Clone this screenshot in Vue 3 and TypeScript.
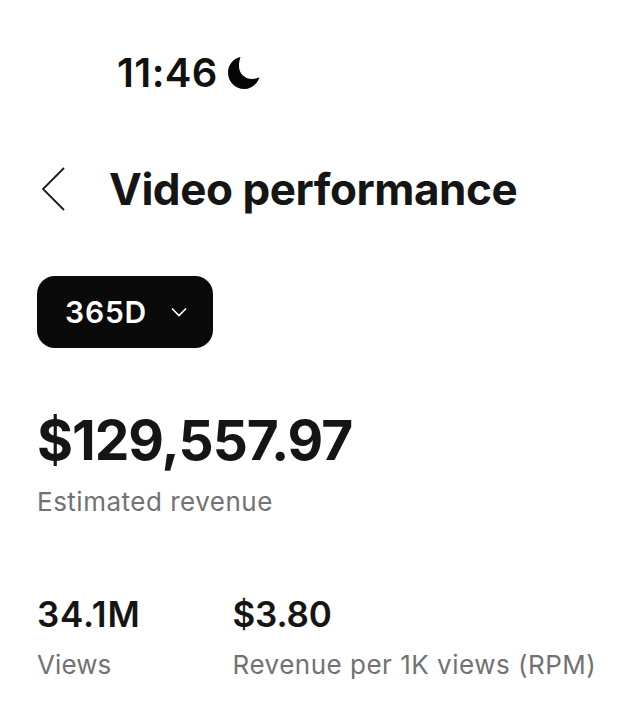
<script setup lang="ts">
const stats = [
  { value: '34.1M', label: 'Views' },
  { value: '$3.80', label: 'Revenue per 1K views (RPM)' },
]
</script>

<template>
  <div class="page">
    <div class="status">
      <span class="time">11:46</span>
      <svg class="moon" width="32" height="32" viewBox="0 0 32 32"><path d="M12.500 0C5.200 1.600 0 8 0 15.400 0 24.600 7.200 32 16.200 32 23.200 32 29 27.500 31.500 20.200 29 21.500 26.500 22 24 22 16.500 22 11 16.200 11 9.200 11 6 11.400 3 12.500 0z" fill="#050505"/></svg>
    </div>
    <div class="header">
      <svg class="back" width="24" height="46" viewBox="0 0 24 46"><path d="M23 2 2 23l21 21" fill="none" stroke="#1a1a1a" stroke-width="1.800"/></svg>
      <h1>Video performance</h1>
    </div>
    <button class="range">
      <span>365D</span>
      <svg width="16" height="10" viewBox="0 0 16 10"><path d="M1 1.500l7 7 7-7" fill="none" stroke="#fff" stroke-width="1.600"/></svg>
    </button>
    <div class="amount">$129,557.97</div>
    <div class="label">Estimated revenue</div>
    <div class="stats">
      <div v-for="s in stats" :key="s.label" class="stat">
        <div class="value">{{ s.value }}</div>
        <div class="label">{{ s.label }}</div>
      </div>
    </div>
  </div>
</template>

<style>
html, body { background: #fff; }
</style>

<style scoped>
.page {
  width: 635px;
  height: 720px;
  padding: 50px 0 0 37px;
  box-sizing: border-box;
  font-family: Inter, "Liberation Sans", sans-serif;
  color: #0c0c0c;
  overflow: hidden;
}
.status {
  display: flex;
  align-items: center;
  gap: 10px;
  padding-left: 80px;
  height: 46px;
}
.time { font-size: 40px; font-weight: 600; line-height: 46px; letter-spacing: 0.4px; color: #111; width: 101px; white-space: nowrap; }
.header {
  display: flex;
  align-items: center;
  gap: 44px;
  margin-top: 70px;
  height: 46px;
  margin-left: 4px;
}
h1 { margin: 0; font-size: 44px; font-weight: 700; line-height: 46px; letter-spacing: -0.45px; color: #151515; }
.range {
  display: flex;
  align-items: center;
  gap: 24px;
  margin-top: 64px;
  height: 72px;
  width: 176px;
  padding: 0 0 0 28px;
  border: 0;
  border-radius: 18px;
  background: #0a0a0a;
  color: #fff;
  font: 600 30px Inter, sans-serif;
  letter-spacing: 0.8px;
}
.amount { margin-top: 60px; font-size: 55px; font-weight: 700; line-height: 64px; letter-spacing: -1px; color: #151515; }
.label { margin-top: 14px; font-size: 26px; line-height: 32px; letter-spacing: 0.5px; color: #727272; }
.stats { display: flex; gap: 92px; margin-top: 76px; }
.value { font-size: 35px; font-weight: 600; line-height: 40px; color: #151515; letter-spacing: -0.2px; }
.stat:first-child .value { letter-spacing: 0.8px; }
.stat:first-child .label { letter-spacing: 0.1px; }
.stat .label { margin-top: 15px; }
</style>
